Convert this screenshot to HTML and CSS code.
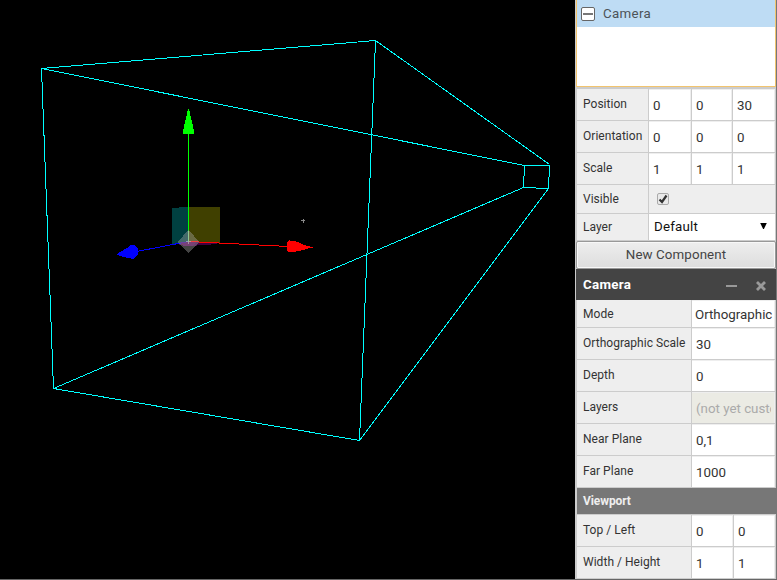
FILE: index.html
```html
<!DOCTYPE html>
<html lang="en">
<head>
<meta charset="utf-8">
<title>Scene editor</title>
<link rel="stylesheet" href="styles.css">
</head>
<body>
<div class="editor">
  <main class="viewport">
    <svg class="scene" width="575" height="579" viewBox="0 0 575 579" shape-rendering="crispEdges">
      <path fill="#004040" d="M172 208h7v-1h9v35l-16 2z"/>
      <path fill="#404000" d="M188 207h32v36l-32-1z"/>
      <path fill="#400040" d="M173 243l15-1 32 1-12 2-23 1z"/>
      <path stroke="#00f" d="M188.500 241.500L136.500 251.500"/>
      <path stroke="#f00" d="M188.500 241.500L288.500 246.500"/>
      <path stroke="#0f0" d="M188.500 242V132"/>
      <path fill="#0f0" d="M188 109h1l5 22v3h-11v-3z"/>
      <path fill="#00f" d="M117 254l10-6 4-3h3l4 3v7l-3 2-2 2-5-1-11-3z"/>
      <path fill="#f00" d="M287 243l1-2h1v-1h1v1h4l3 1 3 1 4 2 4 1 3 1h2v1h-4l-5 2-7 1-3 1h-6l-1-2z"/>
      <path fill="#aaa" fill-opacity=".4" d="M188.500 230l11 12-11 11-11-11z"/>
      <path fill="#804080" d="M180 242h17l-5 4h-9z" fill-opacity=".6"/>
      <path stroke="#bbb" stroke-opacity=".65" d="M188.500 231v13M186 241.500h5"/>
      <path stroke="#f04040" d="M191 241.500h7"/>
      <path stroke="#888" d="M301 220.500h4M303.500 219v4"/>
      <g fill="none" stroke="#0ff">
        <path d="M41.500 68.500L375.500 40.500L359.500 440.500L53.500 388.500Z"/>
        <path d="M524.500 165.500H549.500L548.500 188.500L523.500 187.500Z"/>
        <path d="M41.500 68.500L524.500 165.500M375.500 40.500L549.500 164.500M359.500 440.500L548.500 188.500M53.500 388.500L523.500 187.500"/>
      </g>
    </svg>
  </main>
  <aside class="inspector">
    <div class="tree">
      <div class="tree-item"><span class="toggle"></span><span>Camera</span></div>
    </div>
    <section class="props object">
      <div class="row"><label>Position</label><b>0</b><b>0</b><b>30</b></div>
      <div class="row"><label>Orientation</label><b>0</b><b>0</b><b>0</b></div>
      <div class="row"><label>Scale</label><b>1</b><b>1</b><b>1</b></div>
      <div class="row visible"><label>Visible</label>
        <div class="check-cell"><span class="check"><svg width="10" height="10" viewBox="0 0 10 10"><path d="M1.500 5.500L4 8L8.500 1.500" fill="none" stroke="#333" stroke-width="2.200"/></svg></span></div>
      </div>
      <div class="row layer"><label>Layer</label>
        <div class="select"><span>Default</span><svg width="7" height="6" viewBox="0 0 7 6"><path d="M.2 0h6.600L3.900 6h-.8z"/></svg></div>
      </div>
    </section>
    <button class="new">New Component</button>
    <header class="component-head"><span>Camera</span>
      <i class="minus"></i>
      <svg width="10" height="10" viewBox="0 0 10 10"><path d="M1 1L9 9M9 1L1 9" stroke="#999" stroke-width="2.800"/></svg>
    </header>
    <section class="props component">
      <div class="row mode"><label>Mode</label><b>Orthographic</b></div>
      <div class="row"><label>Orthographic Scale</label><b>30</b></div>
      <div class="row"><label>Depth</label><b>0</b></div>
      <div class="row"><label>Layers</label><b class="disabled"><span>(not yet custo</span></b></div>
      <div class="row"><label>Near Plane</label><b>0,1</b></div>
      <div class="row"><label>Far Plane</label><b>1000</b></div>
      <h3>Viewport</h3>
      <div class="row pair"><label>Top / Left</label><b>0</b><b>0</b></div>
      <div class="row pair"><label>Width / Height</label><b>1</b><b>1</b></div>
    </section>
  </aside>
</div>
</body>
</html>
```
FILE: styles.css
```css
* { box-sizing: border-box; }
body {
  margin: 0;
  overflow: hidden;
  font: 13.333px/16px Roboto, sans-serif;
  color: #333;
}
.editor {
  display: grid;
  grid-template-columns: 575px 202px;
  height: 580px;
  border-bottom: 1px solid #666;
  background: #000;
}
.scene { display: block; }
.inspector {
  height: 579px;
  border-left: 1px solid #ccc;
  border-right: 1px solid #777;
  background: #ccc;
}
.tree {
  height: 87px;
  border: solid #f2c46e;
  border-width: 0 1px 1px;
  background: #fff;
}
.tree-item {
  display: flex;
  align-items: center;
  gap: 8px;
  height: 27px;
  padding-left: 4px;
  background: #bedcf4;
  color: #4d5358;
  letter-spacing: .3px;
}
.toggle {
  display: grid;
  place-items: center;
  width: 14px;
  height: 14px;
  border: 1px solid #666;
  border-radius: 2px;
  background: #fff;
}
.toggle::before { content: ""; width: 10px; height: 2px; background: #777; }
.props { padding: 0 1px; }
.object { padding-top: 2px; }
.row {
  display: grid;
  column-gap: 1px;
  height: 32px;
  border-bottom: 1px solid #ccc;
}
.object .row { grid-template-columns: 71px 42px 40px 42px; }
.component .row { grid-template-columns: 114px 83px; }
.component .pair { grid-template-columns: 114px 41px 41px; }
.row label {
  padding: 7px 0 0 6px;
  background: #eee;
  font-size: 12px;
  letter-spacing: .03px;
  white-space: nowrap;
}
.row b {
  padding: 8px 0 0 4px;
  border: solid #eee;
  border-width: 1px 1px 0 0;
  background: #fff;
  font-weight: 400;
  white-space: nowrap;
  overflow: hidden;
}
.object .visible, .object .layer { grid-template-columns: 71px 126px; }
.visible { height: 29px; }
.layer { height: 27px; }
.layer label { padding-top: 5px; }
.visible label { padding-top: 6px; }
.check-cell { padding: 8px 0 0 8px; background: #eee; }
.check {
  display: grid;
  place-items: center;
  width: 12px;
  height: 12px;
  border: 1px solid #aaa;
  border-radius: 2px;
  background: #e9e9e9;
}
.select {
  display: flex;
  justify-content: space-between;
  align-items: center;
  padding: 0 8px 0 5px;
  background: #fff;
  color: #111;
  letter-spacing: .2px;
}
.select svg { margin-bottom: 2px; }
.new {
  display: block;
  width: 200px;
  height: 28px;
  padding: 0;
  border: 1px solid #999;
  border-radius: 2px;
  box-shadow: inset 0 0 0 1px #f8f8f8;
  background: linear-gradient(#eee, #ddd);
  color: #444;
  font: 13.333px/26px Roboto, sans-serif;
  letter-spacing: .1px;
}
.component-head {
  display: flex;
  align-items: center;
  height: 31px;
  padding: 0 10px 0 7px;
  background: #444;
  color: #fff;
  font-size: 13.333px;
  font-weight: 700;
  letter-spacing: .3px;
}
.component-head span { flex: 1; }
.component-head svg { margin-top: 3px; }
.minus { width: 11px; height: 2px; margin: 2px 19px 0 0; background: #999; }
.component .mode { height: 28px; }
.component .mode label { padding-top: 6px; }
.component .mode b { padding: 6px 0 0 3px; }
.component .disabled {
  padding-right: 3px;
  background: #ebebe4;
  color: #aaa;
}
.disabled span { display: block; overflow: hidden; }
h3 {
  height: 27px;
  margin: 0 -1px 0 0;
  padding: 5px 6px;
  border-bottom: 1px solid #ccc;
  background: #777;
  color: #eee;
  font-size: 12px;
  font-weight: 700;
  letter-spacing: -.1px;
}
```
